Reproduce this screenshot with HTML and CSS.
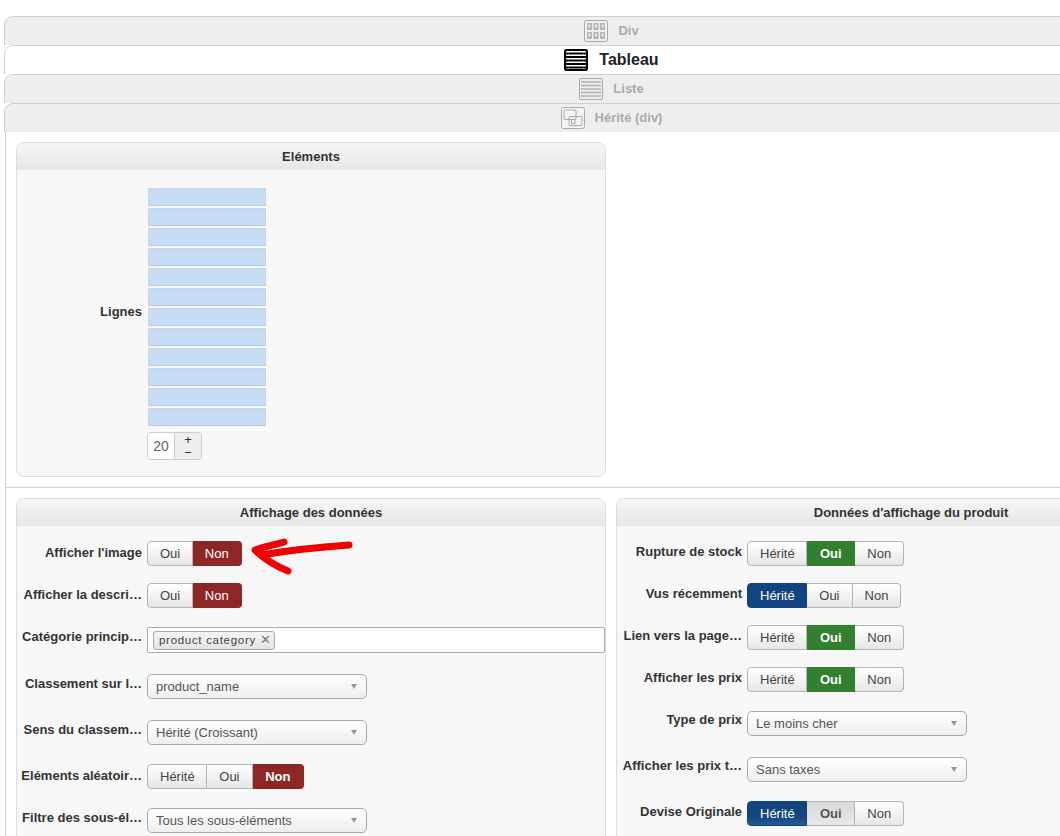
FILE: index.html
```html
<!DOCTYPE html>
<html lang="fr">
<head>
<meta charset="utf-8">
<title>Tableau</title>
<link rel="stylesheet" href="styles.css">
</head>
<body>
<div class="page">
  <nav class="tabs">
    <div class="tab">
      <svg class="tab-icon" viewBox="0 0 24 22"><rect x=".5" y=".5" width="23" height="21" rx="1.500" fill="#efefef" stroke="#aaa"/><g fill="#b4b4b4"><path d="M3 3h5v7H3zM9.500 3h5v7h-5zM16 3h5v7h-5zM3 12h5v7H3zM9.500 12h5v7h-5zM16 12h5v7h-5z"/></g><g fill="#eee"><path d="M4.500 4.500h2v3h-2zM11 4.500h2v3h-2zM17.500 4.500h2v3h-2zM4.500 13.500h2v3h-2zM11 13.500h2v3h-2zM17.500 13.500h2v3h-2z"/></g></svg>
      <span class="tab-label">Div</span>
    </div>
    <div class="tab tab-active">
      <svg class="tab-icon" viewBox="0 0 24 22"><rect x="1" y="1" width="22" height="20" rx="1.500" fill="#fff" stroke="#000" stroke-width="2"/><path d="M2 4.500h20M2 8h20M2 11.500h20M2 15h20M2 18.500h20" stroke="#000" stroke-width="2"/><path d="M19.500 2v18M4.500 2v18" stroke="#fff" stroke-width="1" stroke-dasharray="1.500 2"/></svg>
      <span class="tab-label">Tableau</span>
    </div>
    <div class="tab">
      <svg class="tab-icon" viewBox="0 0 24 22"><rect x=".5" y=".5" width="23" height="21" rx="1.500" fill="#ececec" stroke="#aaa"/><path d="M2 4h20M2 7.500h20M2 11h20M2 14.500h20M2 18h20" stroke="#b0b0b0" stroke-width="1.600"/></svg>
      <span class="tab-label">Liste</span>
    </div>
    <div class="tab">
      <svg class="tab-icon" viewBox="0 0 24 22"><rect x=".5" y=".5" width="23" height="21" rx="2" fill="#f2f2f2" stroke="#aaa"/><rect x="3" y="3" width="12" height="9.500" rx="1" fill="none" stroke="#aaa"/><rect x="8" y="9.500" width="13" height="9" rx="1" fill="none" stroke="#aaa"/><path d="M10.500 12.500v4h3M14 12v5" fill="none" stroke="#aaa"/></svg>
      <span class="tab-label">Hérité (div)</span>
    </div>
  </nav>

  <main class="content">
    <section class="panels">
      <div class="panel panel-elements">
        <h2 class="panel-title">Eléments</h2>
        <div class="panel-body lines">
          <div class="lines-label">Lignes</div>
          <div class="lines-main">
            <div class="bars">
              <div class="bar"></div><div class="bar"></div><div class="bar"></div><div class="bar"></div>
              <div class="bar"></div><div class="bar"></div><div class="bar"></div><div class="bar"></div>
              <div class="bar"></div><div class="bar"></div><div class="bar"></div><div class="bar"></div>
            </div>
            <div class="spinner">
              <span class="spinner-value">20</span>
              <span class="spinner-btns"><span>+</span><span>−</span></span>
            </div>
          </div>
        </div>
      </div>
    </section>

    <hr class="divider">

    <section class="panels">
      <div class="panel">
        <h2 class="panel-title">Affichage des données</h2>
        <div class="panel-body form form-left">
          <div class="row">
            <label class="row-label">Afficher l'image</label>
            <div class="seg"><span class="seg-btn">Oui</span><span class="seg-btn on-red">Non</span></div>
            <svg class="arrow" viewBox="0 0 110 38"><path d="M100 7C72 9 42 12 12 17M35 4C25 7 14 9 6 12C14 20 28 29 39 33" fill="none" stroke="#f00000" stroke-width="7" stroke-linecap="round" stroke-linejoin="round"/></svg>
          </div>
          <div class="row">
            <label class="row-label">Afficher la descri…</label>
            <div class="seg"><span class="seg-btn">Oui</span><span class="seg-btn on-red">Non</span></div>
          </div>
          <div class="row">
            <label class="row-label">Catégorie princip…</label>
            <div class="tag-input"><span class="tag">product category <span class="tag-x">✕</span></span></div>
          </div>
          <div class="row">
            <label class="row-label">Classement sur l…</label>
            <div class="select">product_name</div>
          </div>
          <div class="row">
            <label class="row-label">Sens du classem…</label>
            <div class="select">Hérité (Croissant)</div>
          </div>
          <div class="row">
            <label class="row-label">Eléments aléatoir…</label>
            <div class="seg"><span class="seg-btn">Hérité</span><span class="seg-btn">Oui</span><span class="seg-btn on-red bold">Non</span></div>
          </div>
          <div class="row">
            <label class="row-label">Filtre des sous-él…</label>
            <div class="select">Tous les sous-éléments</div>
          </div>
        </div>
      </div>

      <div class="panel">
        <h2 class="panel-title">Données d'affichage du produit</h2>
        <div class="panel-body form">
          <div class="row">
            <label class="row-label">Rupture de stock</label>
            <div class="seg"><span class="seg-btn">Hérité</span><span class="seg-btn on-green bold">Oui</span><span class="seg-btn">Non</span></div>
          </div>
          <div class="row">
            <label class="row-label">Vus récemment</label>
            <div class="seg"><span class="seg-btn on-blue">Hérité</span><span class="seg-btn">Oui</span><span class="seg-btn">Non</span></div>
          </div>
          <div class="row">
            <label class="row-label">Lien vers la page…</label>
            <div class="seg"><span class="seg-btn">Hérité</span><span class="seg-btn on-green bold">Oui</span><span class="seg-btn">Non</span></div>
          </div>
          <div class="row">
            <label class="row-label">Afficher les prix</label>
            <div class="seg"><span class="seg-btn">Hérité</span><span class="seg-btn on-green bold">Oui</span><span class="seg-btn">Non</span></div>
          </div>
          <div class="row">
            <label class="row-label">Type de prix</label>
            <div class="select">Le moins cher</div>
          </div>
          <div class="row">
            <label class="row-label">Afficher les prix t…</label>
            <div class="select">Sans taxes</div>
          </div>
          <div class="row">
            <label class="row-label">Devise Originale</label>
            <div class="seg"><span class="seg-btn on-blue fade">Hérité</span><span class="seg-btn hover bold">Oui</span><span class="seg-btn">Non</span></div>
          </div>
        </div>
      </div>
    </section>
  </main>
</div>
</body>
</html>
```
FILE: styles.css
```css
* { box-sizing: border-box; }
html, body { margin: 0; height: 836px; overflow: hidden; background: #fff; }
body { font-family: "Liberation Sans", Arial, sans-serif; font-size: 13px; color: #333; }
.page { width: 1218px; padding: 16px 0 0 4px; }

.tab {
  height: 29px;
  display: flex;
  align-items: center;
  justify-content: center;
  gap: 10px;
  background: #eee;
  border: 1px solid #cfcfcf;
  border-width: 1px 0 0 1px;
  border-top-left-radius: 9px;
  font-weight: bold;
  color: #aaa;
}
.tab-active { background: #fff; color: #222; font-size: 16px; gap: 11px; }
.tab-icon { width: 24px; height: 22px; flex: none; }
.tab-label { line-height: 22px; }

.content { border-left: 1px solid #cfcfcf; margin-left: 1px; padding-top: 10px; }
.panels { display: flex; gap: 10px; padding-left: 10px; }
.panel {
  width: 590px;
  flex: none;
  background: #f7f7f7;
  border: 1px solid #ddd;
  border-radius: 8px;
  overflow: hidden;
}
.panel-elements { height: 335px; }
.panel-title {
  margin: 0;
  height: 27px;
  line-height: 27px;
  text-align: center;
  font-size: 13px;
  font-weight: bold;
  color: #333;
  background: linear-gradient(#f6f6f6, #e6e6e6);
}
.divider { border: 0; border-top: 1px solid #d2d2d2; margin: 10px 0; }

.lines { display: flex; padding-top: 18px; }
.lines-label { width: 125px; padding-top: 113px; text-align: right; font-weight: bold; line-height: 22px; }
.lines-main { margin-left: 5px; }
.bars { display: flex; flex-direction: column; gap: 2px; margin-left: 1px; }
.bar { width: 118px; height: 18px; background: #c6dcf4; border: 1px solid #c6d6e8; border-bottom-color: #bcc8d4; }
.spinner {
  display: flex;
  width: 55px;
  height: 28px;
  margin-top: 6px;
  border: 1px solid #ccc;
  border-radius: 4px;
  overflow: hidden;
}
.spinner-value { width: 27px; background: #fff; text-align: center; line-height: 26px; font-size: 14px; color: #666; border-right: 1px solid #ccc; }
.spinner-btns { flex: 1; display: flex; flex-direction: column; background: #eee; text-align: center; font-size: 13px; line-height: 13px; color: #333; }

.form { padding: 15px 0 0; }
.row { position: relative; display: flex; align-items: flex-start; margin-bottom: 17px; }
.row-label {
  width: 125px;
  flex: none;
  text-align: right;
  font-weight: bold;
  line-height: 22px;
  white-space: nowrap;
}
.form-left .row-label { padding-top: 1px; }
.seg { display: flex; margin-left: 5px; height: 25px; }
.seg-btn {
  padding: 0 12px;
  line-height: 23px;
  font-size: 13px;
  color: #444;
  background: linear-gradient(#fff, #e6e6e6);
  border: 1px solid #b5b5b5;
  border-left-width: 0;
}
.seg-btn:first-child { border-left-width: 1px; padding-right: 11.600px; border-radius: 4px 0 0 4px; }
.seg-btn:last-child { border-radius: 0 4px 4px 0; }
.seg-btn.bold { padding: 0 12.700px; font-weight: bold; }
.on-red, .on-green, .on-blue { color: #fff; }
.on-red { background: #8f2626; border-color: #8f2626; }
.on-green { background: #327f30; border-color: #327f30; }
.on-blue { background: #12457f; border-color: #12457f; }
.fade { background: linear-gradient(#12457f 60%, #265a92); border-color: #12457f; }
.hover { background: linear-gradient(#d8d8d8, #e8e8e8); color: #555; }

.select {
  position: relative;
  width: 220px;
  height: 25px;
  margin: 2px 0 2px 5px;
  padding-left: 8px;
  line-height: 23px;
  font-size: 13px;
  color: #555;
  background: linear-gradient(#fff, #eee);
  border: 1px solid #aaa;
  border-radius: 5px;
}
.select::after {
  content: "";
  position: absolute;
  right: 9px;
  top: 9px;
  border: 3px solid transparent;
  border-top: 5px solid #999;
  border-bottom: 0;
}
.tag-input {
  width: 458px;
  height: 26px;
  margin: 2px 0 2px 5px;
  padding: 3px 5px;
  background: #fff;
  border: 1px solid #aaa;
  border-radius: 2px;
}
.tag {
  display: inline-block;
  height: 19px;
  padding: 0 3px 0 5px;
  line-height: 16px;
  font-size: 11.500px;
  letter-spacing: .7px;
  color: #444;
  background: linear-gradient(#f4f4f4, #e4e4e4);
  border: 1px solid #aaa;
  border-radius: 3px;
}
.tag-x { font-size: 13px; letter-spacing: 0; color: #777; }
.arrow { position: absolute; left: 232px; top: -3px; width: 110px; height: 38px; }
```
